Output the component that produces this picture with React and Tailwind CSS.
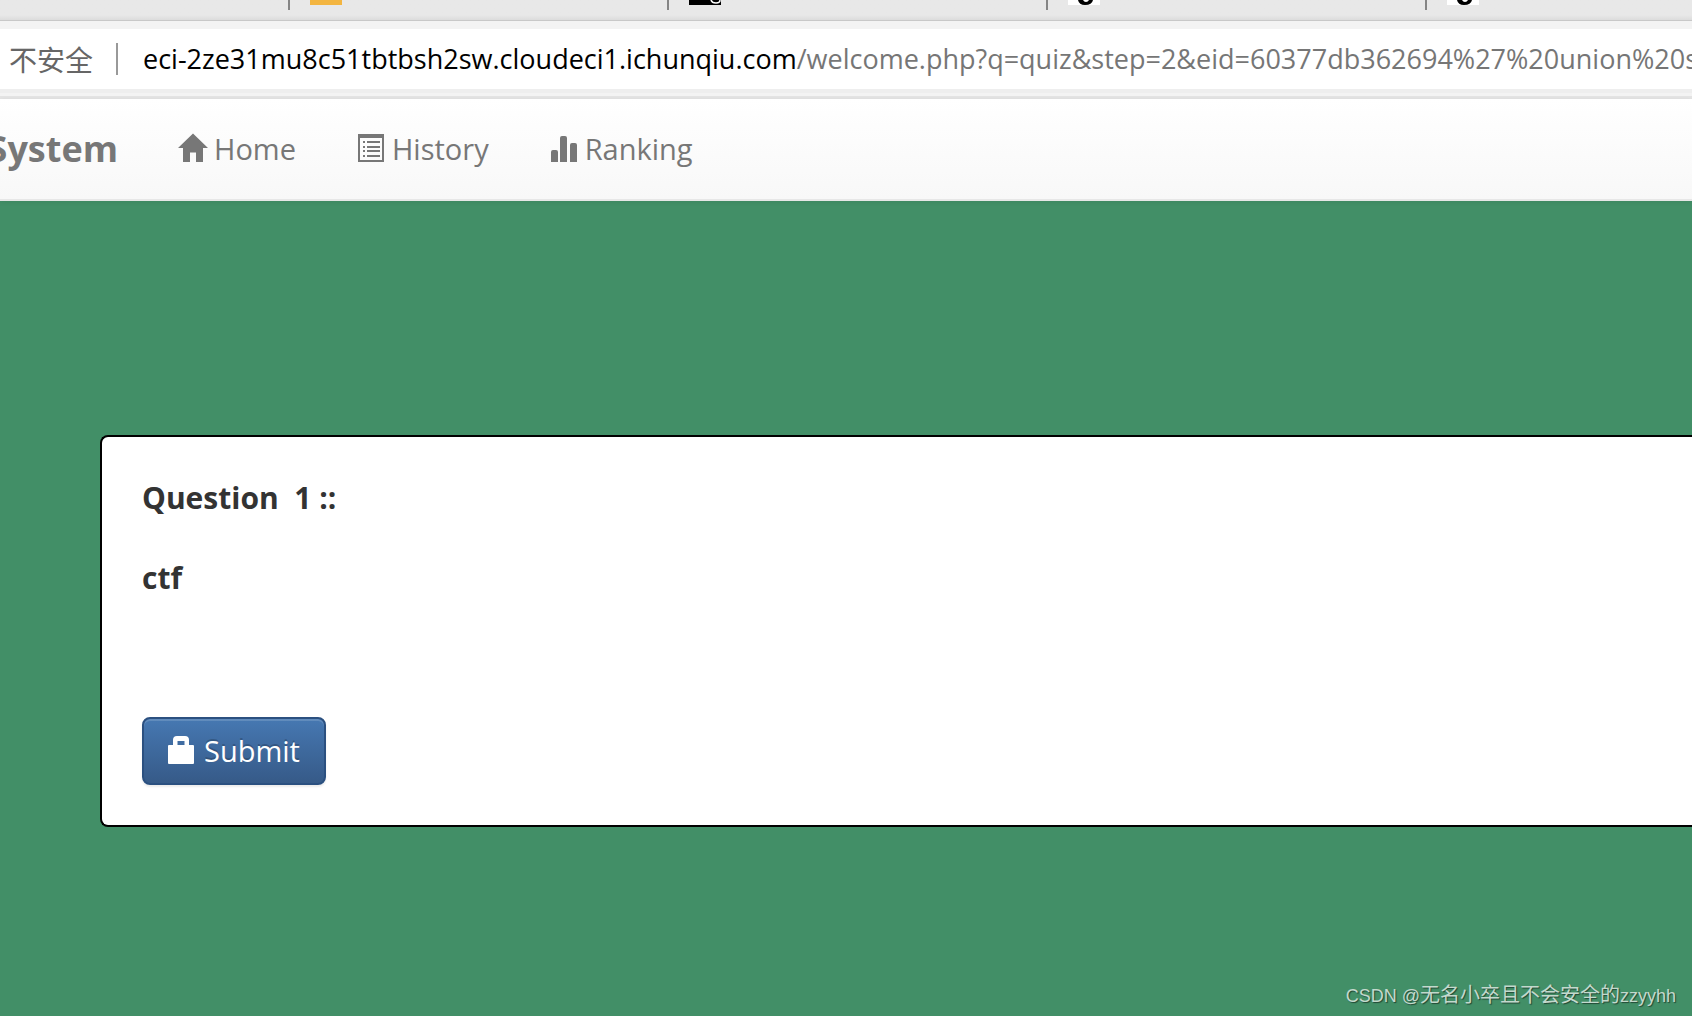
import React from 'react'

const HomeIcon = () => (
  <svg className="h-8 w-[30px] shrink-0" viewBox="0 0 30 32" fill="currentColor" aria-hidden="true">
    <path d="M15 0.5 L30 15 H25 V29 H18 V19.5 H12 V29 H5 V15 H0 Z" />
  </svg>
)

const ListIcon = () => (
  <svg className="h-8 w-[26px] shrink-0" viewBox="0 0 26 32" fill="currentColor" aria-hidden="true">
    <path fillRule="evenodd" d="M0 1 H26 V29 H0 Z M2 5 V27 H24 V5 Z" />
    <path d="M5 8h2v2H5z M9 8h13v2H9z M5 13h2v2H5z M9 13h13v2H9z M5 17h2v2H5z M9 17h13v2H9z M5 22h2v2H5z M9 22h13v2H9z" />
  </svg>
)

const StatsIcon = () => (
  <svg className="h-8 w-[26px] shrink-0" viewBox="0 0 26 32" fill="currentColor" aria-hidden="true">
    <path d="M0 29V19q0-2 2-2h3q2 0 2 2v10z M9 29V5q0-2 2-2h3q2 0 2 2v24z M19 29V12q0-2 2-2h3q2 0 2 2v17z" />
  </svg>
)

const LockIcon = () => (
  <svg className="h-8 w-[26px] shrink-0" viewBox="0 0 26 32" fill="currentColor" aria-hidden="true">
    <path fillRule="evenodd" d="M5 10 V5 Q5 1 9 1 H17 Q21 1 21 5 V10 H25 Q26 10 26 11 V28 Q26 29 25 29 H1 Q0 29 0 28 V11 Q0 10 1 10 Z M9.500 10 H16.500 V6 H9.500 Z" />
  </svg>
)

const tabs = ['orange', 'black', 'white', 'white']

const Favicon = ({ kind }) => {
  if (kind === 'orange') return <div className="h-[5px] w-8 bg-[#f3b541]" />
  const dark = kind === 'black'
  return (
    <svg className="h-[5px] w-8" viewBox="0 0 32 5" aria-hidden="true">
      <rect width="32" height="5" fill={dark ? '#000' : '#fff'} />
      {dark ? (
        <path d="M22 0 Q23 3 27 3 Q31 3 31 0" fill="none" stroke="#fff" strokeWidth="1.500" />
      ) : (
        <path d="M10 0 H15 Q16 2 18 2 Q20 2 21 0 H25 Q24 5 17 5 Q11 5 10 0Z" fill="#000" />
      )}
    </svg>
  )
}

const TabStrip = () => (
  <div className="flex h-[21px] items-start overflow-hidden border-b border-[#c8c8c8] bg-linear-to-b from-[#e8e8e8] from-75% to-[#dcdcdc] pl-[288px]">
    {tabs.map((kind, i) => (
      <div key={i} className="flex h-[10px] w-[379px] shrink-0 border-l-2 border-[#858585] pl-5">
        <Favicon kind={kind} />
      </div>
    ))}
  </div>
)

const AddressBar = () => (
  <div className="border-b-3 border-[#e4e4e4] bg-[#f3f3f3] pt-2 pb-[3px]">
    <div className="flex h-16 items-center overflow-hidden border-b-4 border-[#eeeeee] bg-white pl-[9px] whitespace-nowrap">
      <span className="shrink-0 font-['Noto_Sans_CJK_SC',sans-serif] text-[28px] leading-10 text-[#666666]">不安全</span>
      <span className="ml-[23px] h-8 w-[2px] shrink-0 bg-[#999999]" />
      <div role="textbox" aria-label="Address" className="ml-[25px] text-[27px] leading-10 text-[#767676]">
        <span className="text-black">eci-2ze31mu8c51tbtbsh2sw.cloudeci1.ichunqiu.com</span>
        /welcome.php?q=quiz&amp;step=2&amp;eid=60377db362694%27%20union%20se
      </div>
    </div>
  </div>
)

const Navbar = () => (
  <header className="z-10 flex h-[102px] items-center border-b-2 border-[#e7e7e7] bg-linear-to-b from-white to-[#f8f8f8] text-[#777777] shadow-[0_1px_5px_rgba(0,0,0,0.075)]">
    <a href="#" className="flex w-[118px] justify-end overflow-hidden text-[36px] leading-[60px] font-bold">
      System
    </a>
    <nav className="ml-[60px] flex gap-[62px] text-[29px] leading-10">
      <a href="#home" className="flex items-center gap-[6px]">
        <HomeIcon />
        Home
      </a>
      <a href="#history" className="flex items-center gap-2">
        <ListIcon />
        History
      </a>
      <a href="#ranking" className="flex items-center gap-2">
        <StatsIcon />
        Ranking
      </a>
    </nav>
  </header>
)

const Question = () => (
  <form className="ml-[100px] flex flex-col items-start rounded-l-lg border-2 border-r-0 border-black bg-white px-10 pt-[41px] pb-10 text-[#333333]">
    <p className="text-[30px] leading-10 font-bold whitespace-pre">Question  1 ::</p>
    <p className="mt-10 text-[30px] leading-10 font-bold">ctf</p>
    <button
      type="button"
      className="mt-[119px] flex h-[68px] items-center gap-[10px] rounded-lg border-2 border-[#2b5080] bg-linear-to-b from-[#4678b2] to-[#365a88] px-6 text-[29px] leading-10 text-white shadow-[inset_0_2px_0_rgba(255,255,255,0.15),0_2px_2px_rgba(0,0,0,0.075)] text-shadow-[0_-2px_0_rgba(0,0,0,0.2)]">
      <LockIcon />
      Submit
    </button>
  </form>
)

const App = () => {
  return (
    <div className="flex min-h-screen flex-col overflow-hidden bg-[#428f67] font-['Open_Sans','Noto_Sans_CJK_SC',sans-serif]">
      <TabStrip />
      <AddressBar />
      <Navbar />
      <main className="pt-[234px]">
        <Question />
      </main>
      <footer className="mt-auto pr-4 pb-[6px] text-right font-['Liberation_Sans','Noto_Sans_CJK_SC',sans-serif] text-[18px] leading-7 text-[#c3d9cd] text-shadow-[1px_1px_1px_rgba(0,0,0,0.5)]">
        CSDN @<span className="text-[20px]">无名小卒且不会安全的</span>zzyyhh
      </footer>
    </div>
  )
}

export default App
